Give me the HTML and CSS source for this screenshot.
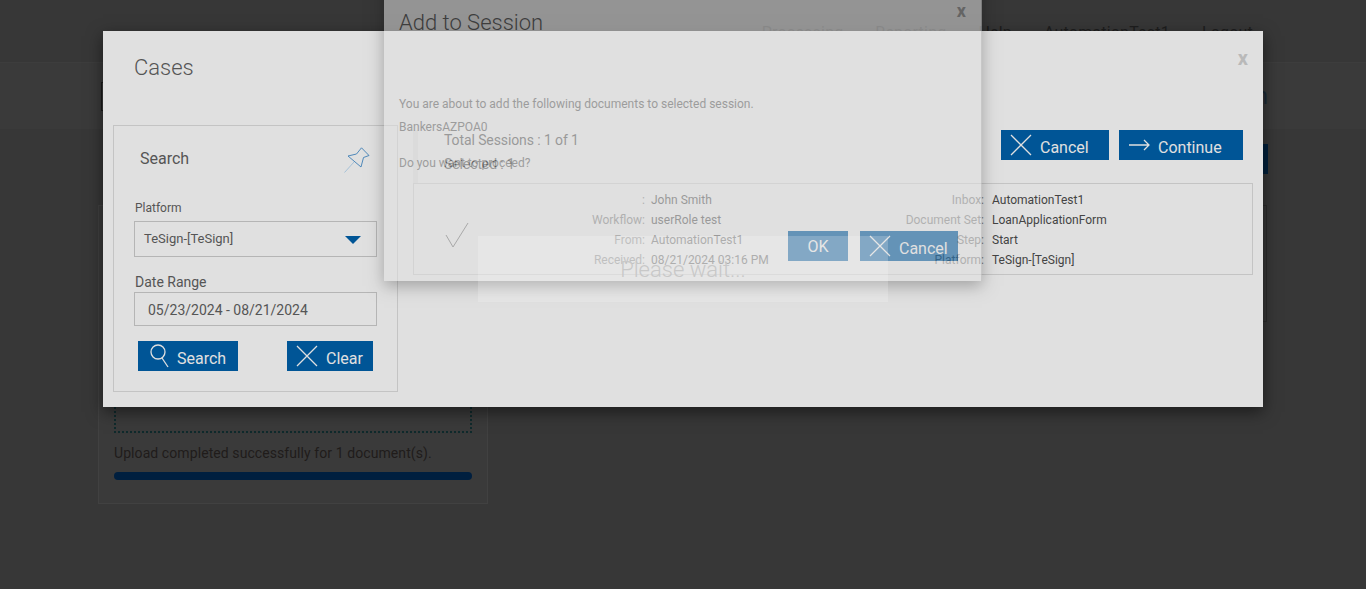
FILE: index.html
```html
<!DOCTYPE html>
<html lang="en">
<head>
    <meta charset="UTF-8">
    <title>Cases</title>
    <link rel="stylesheet" href="styles.css">
</head>
<body>
    <!-- Page behind the dialogs -->
    <header class="top-bar">
        <span>Processing</span>
        <span>Reporting</span>
        <span>Help</span>
        <span>AutomationTest1</span>
        <span>Logout</span>
    </header>
    <div class="title-bar"><span class="title-bar-mark"></span><span class="page-title">Session</span></div>
    <div class="content">
        <section class="upload-panel">
            <div class="drop-zone"></div>
            <p class="upload-msg">Upload completed successfully for 1 document(s).</p>
            <div class="progress"></div>
        </section>
        <section class="side">
            <div class="side-btn"></div>
            <div class="side-panel"></div>
        </section>
    </div>

    <!-- Cases dialog -->
    <div class="modal cases-modal">
        <span class="close">x</span>
        <h2 class="modal-title">Cases</h2>
        <div class="cases-body">
            <aside class="search-panel">
                <div class="search-head">
                    <h3>Search</h3>
                    <svg class="pin" width="26" height="26" viewBox="0 0 26 26" fill="none" stroke="#3f7fb5" stroke-width=".9">
                        <path d="M4 9 L12.5 7 L17.500 .8 L25 8.500 L19.500 10.500 L17 20 Z"/>
                        <path d="M.5 25.500 L10 15" stroke="#9fbdd6"/>
                    </svg>
                </div>
                <label class="field-label">Platform</label>
                <div class="select-box">TeSign-[TeSign]<span class="caret"></span></div>
                <label class="field-label date-label">Date Range</label>
                <div class="date-box">05/23/2024 - 08/21/2024</div>
                <div class="search-actions">
                    <button class="btn btn-search">
                        <svg width="20" height="24" viewBox="0 0 20 24" fill="none" stroke="#e0e0e0" stroke-width="1.300"><circle cx="8" cy="8" r="7"/><path d="M12 14 L18 23"/></svg>
                        <span class="btn-text">Search</span>
                    </button>
                    <button class="btn btn-clear">
                        <svg width="22" height="22" viewBox="0 0 22 22" fill="none" stroke="#e0e0e0" stroke-width="1.300"><path d="M1 1 L21 21 M21 1 L1 21"/></svg>
                        <span class="btn-text">Clear</span>
                    </button>
                </div>
            </aside>
            <main class="cases-main">
                <div class="cases-toolbar">
                    <div class="counts">
                        <div>Total Sessions : 1 of 1</div>
                        <div>Selected : 1</div>
                    </div>
                    <div class="toolbar-actions">
                        <button class="btn btn-cancel">
                            <svg width="22" height="22" viewBox="0 0 22 22" fill="none" stroke="#e0e0e0" stroke-width="1.300"><path d="M1 1 L21 21 M21 1 L1 21"/></svg>
                            <span class="btn-text">Cancel</span>
                        </button>
                        <button class="btn btn-continue">
                            <svg width="21" height="12" viewBox="0 0 21 12" fill="none" stroke="#e0e0e0" stroke-width="1.300"><path d="M0 6 H20 M15 1 L20 6 L15 11"/></svg>
                            <span class="btn-text">Continue</span>
                        </button>
                    </div>
                </div>
                <div class="case-row">
                    <div class="case-check">
                        <svg width="24" height="26" viewBox="0 0 24 26" fill="none" stroke="#666" stroke-width="1"><path d="M1 13 L8 25 L23 1"/></svg>
                    </div>
                    <span class="lbl">:</span><span class="val">John Smith</span><span class="lbl">Inbox:</span><span class="val val-r">AutomationTest1</span>
                    <span class="lbl">Workflow:</span><span class="val">userRole test</span><span class="lbl">Document Set:</span><span class="val val-r">LoanApplicationForm</span>
                    <span class="lbl">From:</span><span class="val">AutomationTest1</span><span class="lbl">Step:</span><span class="val val-r">Start</span>
                    <span class="lbl">Received:</span><span class="val">08/21/2024 03:16 PM</span><span class="lbl">Platform:</span><span class="val val-r">TeSign-[TeSign]</span>
                </div>
            </main>
        </div>
    </div>

    <!-- Add to Session dialog, still fading in -->
    <div class="modal session-modal">
        <span class="close session-close">x</span>
        <h2 class="session-title">Add to Session</h2>
        <div class="session-text">
            <p>You are about to add the following documents to selected session.</p>
            <p class="session-name">BankersAZPOA0</p>
            <p class="session-ask">Do you want to proceed?</p>
        </div>
        <div class="session-actions">
            <button class="btn btn-ok">OK</button>
            <button class="btn btn-session-cancel">
                <svg width="22" height="22" viewBox="0 0 22 22" fill="none" stroke="#e0e0e0" stroke-width="1.300"><path d="M1 1 L21 21 M21 1 L1 21"/></svg>
                <span class="btn-text">Cancel</span>
            </button>
        </div>
    </div>

    <div class="wait-box">Please wait...</div>
</body>
</html>
```

FILE: styles.css
```css
/* General */
* {
    box-sizing: border-box;
}
body {
    margin: 0;
    height: 589px;
    overflow: hidden;
    position: relative;
    background-color: #373737;
    font-family: 'Roboto', sans-serif;
    color: #444;
}
h2, h3, p {
    margin: 0;
    font-weight: normal;
}

/* Page behind the dialogs */
.top-bar {
    height: 62px;
    padding: 23px 113px 0 0;
    display: flex;
    justify-content: flex-end;
    gap: 32px;
    font-size: 16px;
    line-height: 20px;
    letter-spacing: .2px;
    color: #1e1e1e;
}
.title-bar {
    height: 67px;
    display: flex;
    align-items: center;
    justify-content: space-between;
    padding: 0 98px 0 101px;
    background-color: #3a3a3a;
    border-top: 1px solid #3d3d3d;
}
.title-bar-mark {
    width: 4px;
    height: 29px;
    border: 1px solid #1c1c1c;
}
.page-title {
    font-size: 24px;
    color: #1a2a36;
}
.content {
    display: flex;
    justify-content: space-between;
    padding: 0 98px;
}
.upload-panel {
    width: 390px;
    height: 299px;
    margin-top: 76px;
    padding: 16px 15px;
    background-color: #3a3a3a;
    border: 1px solid #414141;
}
.drop-zone {
    height: 211px;
    border: 2px dotted #0f2a2c;
}
.upload-msg {
    margin-top: 10px;
    font-size: 14px;
    line-height: 20px;
    letter-spacing: .08px;
    color: #201c1a;
}
.progress {
    height: 8px;
    margin-top: 9px;
    border-radius: 4px;
    background-color: #001f3f;
}
.side {
    width: 300px;
    padding-top: 15px;
}
.side-btn {
    height: 30px;
    background-color: #001f3a;
}
.side-panel {
    height: 117px;
    margin-top: 31px;
    margin-right: 1px;
    border: 1px solid #2c2c2c;
}

/* Dialogs */
.modal {
    position: absolute;
    background-color: #e0e0e0;
    box-shadow: 0 5px 15px rgba(0, 0, 0, .5);
}
.close {
    position: absolute;
    font-size: 20px;
    line-height: 20px;
    font-weight: bold;
    color: #b9b9b9;
}
.modal-title {
    font-size: 22px;
    font-weight: 300;
    line-height: 28px;
    color: #555;
}

/* Cases dialog */
.cases-modal {
    left: 103px;
    top: 31px;
    width: 1160px;
    height: 376px;
    padding: 23px 10px 0;
}
.cases-modal > .close {
    right: 15px;
    top: 17px;
}
.cases-modal .modal-title {
    margin-left: 21px;
}
.cases-body {
    display: flex;
    gap: 15px;
    margin-top: 43px;
}
.search-panel {
    width: 285px;
    height: 267px;
    padding: 21px 20px 0 20px;
    border: 1px solid #c4c4c4;
}
.search-head {
    display: flex;
    justify-content: space-between;
    align-items: center;
    height: 26px;
    padding-left: 6px;
    margin-right: 7px;
}
.search-head h3 {
    margin-bottom: 4px;
    font-size: 16px;
    color: #555;
}
.field-label {
    display: block;
    margin-top: 27px;
    padding-left: 1px;
    font-size: 12px;
    line-height: 16px;
    color: #555;
}
.select-box, .date-box {
    position: relative;
    width: 243px;
    border: 1px solid #b5b5b5;
    font-size: 13px;
    color: #555;
}
.select-box {
    height: 36px;
    margin-top: 5px;
    padding-left: 9px;
    line-height: 34px;
}
.caret {
    position: absolute;
    right: 15px;
    top: 14px;
    border-top: 8px solid #005596;
    border-left: 8px solid transparent;
    border-right: 8px solid transparent;
}
.date-label {
    margin-top: 17px;
    font-size: 14px;
}
.date-box {
    height: 34px;
    margin-top: 2px;
    padding-left: 13px;
    line-height: 34px;
    font-size: 14px;
}
.search-actions {
    display: flex;
    justify-content: space-between;
    padding: 15px 4px 0;
}

/* Buttons */
.btn {
    display: flex;
    align-items: center;
    gap: 8px;
    height: 30px;
    padding: 0 9px;
    border: none;
    background-color: #005596;
    font-family: 'Roboto', sans-serif;
    font-size: 16px;
    color: #e0e0e0;
}
.btn-text {
    padding-top: 4px;
}
.btn-search {
    width: 100px;
    padding-left: 12px;
    gap: 7px;
}
.btn-clear {
    width: 86px;
    gap: 8px;
}
.btn-cancel {
    width: 108px;
}
.btn-continue {
    width: 124px;
    padding-left: 10px;
}

/* Cases list */
.cases-main {
    width: 840px;
}
.cases-toolbar {
    display: flex;
    justify-content: space-between;
    height: 58px;
    padding: 5px 10px 0 0;
}
.counts {
    width: 100%;
    padding: 0 0 0 26px;
    border-left: 5px solid #d6d6d6;
    font-size: 14px;
    letter-spacing: -.1px;
    color: #444;
}
.counts div {
    line-height: 20px;
    margin-bottom: 4px;
}
.toolbar-actions {
    display: flex;
    gap: 10px;
    flex-shrink: 0;
}
.case-row {
    display: grid;
    grid-template-columns: 80px 151px 200px 139px 1fr;
    grid-auto-rows: 20px;
    height: 92px;
    padding-top: 6px;
    border: 1px solid #c4c4c4;
    font-size: 12px;
    line-height: 20px;
}
.case-check {
    grid-row: 1 / span 4;
    display: flex;
    align-items: center;
    justify-content: center;
    padding: 9px 0 0 6px;
}
.lbl {
    text-align: right;
    color: #777;
    white-space: nowrap;
}
.val {
    padding-left: 6px;
    color: #444;
    white-space: nowrap;
}
.val-r {
    padding-left: 8px;
}

/* Add to Session dialog */
.session-modal {
    left: 384px;
    top: -29px;
    width: 598px;
    height: 310px;
    padding: 38px 23px 0 15px;
    opacity: .55;
    border-right: 1px solid rgba(0, 0, 0, .2);
}
.session-close {
    right: 15px;
    top: 30px;
    font-size: 18px;
    color: #8a8a8a;
}
.session-title {
    font-size: 22px;
    font-weight: 300;
    line-height: 28px;
    color: #444;
}
.session-text {
    margin-top: 59px;
    font-size: 12px;
    line-height: 16px;
    color: #666;
}
.session-name {
    margin-top: 7px;
}
.session-ask {
    margin-top: 20px;
}
.session-actions {
    display: flex;
    justify-content: flex-end;
    gap: 12px;
    margin-top: 60px;
}
.btn-ok {
    width: 60px;
    justify-content: center;
}
.btn-session-cancel {
    width: 98px;
    gap: 8px;
}

/* Wait message on top of it all */
.wait-box {
    position: absolute;
    left: 478px;
    top: 236px;
    width: 410px;
    height: 66px;
    padding-top: 20px;
    background-color: rgba(255, 255, 255, .2);
    font-size: 22px;
    font-weight: 300;
    line-height: 28px;
    text-align: center;
    color: #c8c8c8;
}
```
